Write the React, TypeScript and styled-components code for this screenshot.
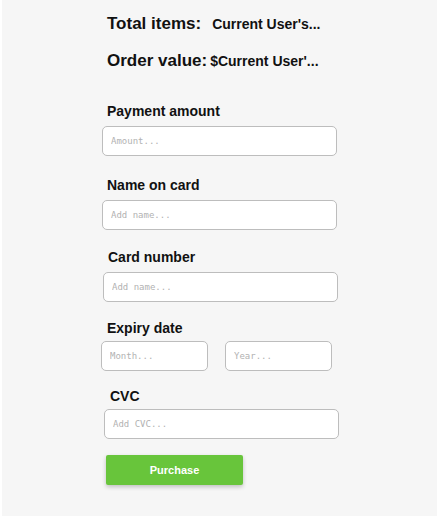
import React from 'react';
import styled, { createGlobalStyle } from 'styled-components';

const GlobalStyle = createGlobalStyle`
  html, body {
    margin: 0;
    padding: 0;
    background: #ffffff;
  }
  body {
    font-family: 'Liberation Sans', Arial, sans-serif;
  }
`;

type Field = {
  label: string;
  placeholder: string;
  top: number;
  labelLeft: number;
  inputLeft: number;
  gap: number;
};

const fields: Field[] = [
  { label: 'Payment amount', placeholder: 'Amount...', top: 32, labelLeft: 107, inputLeft: 102, gap: 7 },
  { label: 'Name on card', placeholder: 'Add name...', top: 21, labelLeft: 107, inputLeft: 102, gap: 7 },
  { label: 'Card number', placeholder: 'Add name...', top: 19, labelLeft: 108, inputLeft: 103, gap: 7 },
];

export default function App(): JSX.Element {
  return (
    <>
      <GlobalStyle />
      <Page>
        <Summary>
          <SummaryRow>
            <SummaryLabel>Total items:</SummaryLabel>
            <SummaryValue $space={11}>Current User's...</SummaryValue>
          </SummaryRow>
          <SummaryRow>
            <SummaryLabel>Order value:</SummaryLabel>
            <SummaryValue $space={3}>$Current User'...</SummaryValue>
          </SummaryRow>
        </Summary>

        {fields.map((f) => (
          <FieldWrap key={f.label} $top={f.top}>
            <Label $left={f.labelLeft} $gap={f.gap}>
              {f.label}
            </Label>
            <Input $left={f.inputLeft} type='text' placeholder={f.placeholder} />
          </FieldWrap>
        ))}

        <FieldWrap $top={18}>
          <Label $left={107} $gap={5}>
            Expiry date
          </Label>
          <DateRow>
            <SmallInput type='text' placeholder='Month...' />
            <SmallInput type='text' placeholder='Year...' />
          </DateRow>
        </FieldWrap>

        <FieldWrap $top={17}>
          <Label $left={110} $gap={5}>
            CVC
          </Label>
          <Input $left={104} type='text' placeholder='Add CVC...' />
        </FieldWrap>

        <PurchaseBtn>Purchase</PurchaseBtn>
      </Page>
    </>
  );
}

const Page = styled.div`
  display: flex;
  flex-direction: column;
  margin: 0 4px 0 2px;
  min-height: 516px;
  background-color: #f6f6f6;
  box-sizing: border-box;
  padding-top: 14px;
`;

const Summary = styled.div`
  display: flex;
  flex-direction: column;
  gap: 17px;
  padding-left: 105px;
`;

const SummaryRow = styled.div`
  display: flex;
  align-items: center;
  height: 20px;
  color: #111;
`;

const SummaryLabel = styled.span`
  font-size: 17px;
  font-weight: bold;
`;

const SummaryValue = styled.span<{ $space: number }>`
  margin-left: ${(p) => p.$space}px;
  font-size: 14px;
  font-weight: bold;
`;

const FieldWrap = styled.div<{ $top: number }>`
  display: flex;
  flex-direction: column;
  margin-top: ${(p) => p.$top}px;
`;

const Label = styled.label<{ $left: number; $gap: number }>`
  display: block;
  margin: 0 0 ${(p) => p.$gap}px ${(p) => p.$left - 2}px;
  height: 16px;
  line-height: 16px;
  font-size: 14px;
  font-weight: bold;
  color: #111;
`;

const Input = styled.input<{ $left: number }>`
  box-sizing: border-box;
  width: 235px;
  height: 30px;
  margin-left: ${(p) => p.$left - 2}px;
  padding: 0 8px;
  border: 1px solid #bdbdbd;
  border-radius: 5px;
  background: #ffffff;
  font-family: 'DejaVu Sans Mono', 'Liberation Mono', monospace;
  font-size: 9px;

  &::placeholder {
    color: #b2b2b2;
  }
  &:focus {
    outline: none;
  }
`;

const DateRow = styled.div`
  display: flex;
  gap: 17px;
  margin-left: 99px;
`;

const SmallInput = styled.input`
  box-sizing: border-box;
  width: 107px;
  height: 30px;
  padding: 0 8px;
  border: 1px solid #bdbdbd;
  border-radius: 5px;
  background: #ffffff;
  font-family: 'DejaVu Sans Mono', 'Liberation Mono', monospace;
  font-size: 9px;

  &::placeholder {
    color: #b2b2b2;
  }
  &:focus {
    outline: none;
  }
`;

const PurchaseBtn = styled.button`
  align-self: flex-start;
  width: 137px;
  height: 30px;
  margin: 16px 0 0 104px;
  border: 0;
  border-radius: 2px;
  background-color: #68c53b;
  color: #ffffff;
  font-family: 'Liberation Sans', Arial, sans-serif;
  font-size: 11px;
  font-weight: bold;
  box-shadow: 0 2px 4px rgba(0, 0, 0, 0.22);
  cursor: pointer;
`;
